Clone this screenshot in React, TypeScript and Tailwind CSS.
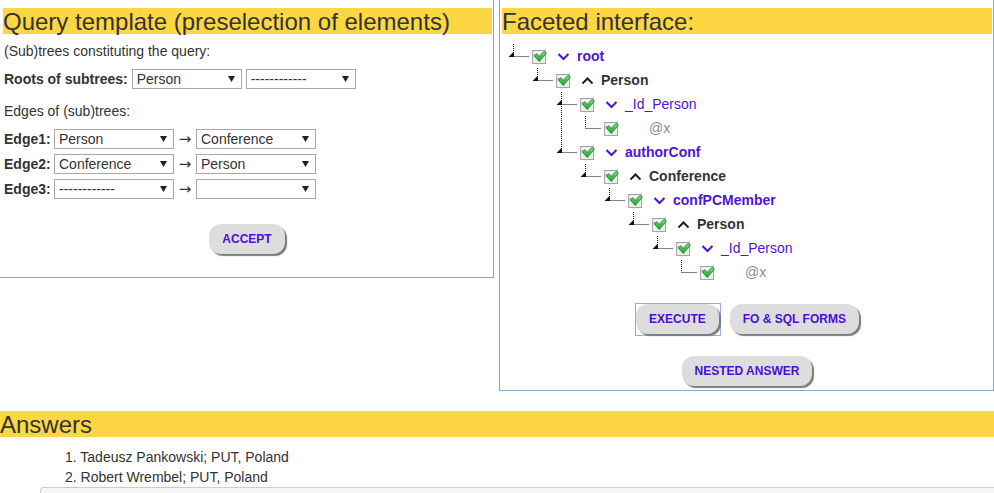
import type { ReactNode } from "react";

const PURPLE = "text-[#5014d4]";

function Select({ value, width }: { value: string; width: string }) {
  return (
    <div
      className={`${width} h-[20px] border border-[#a9a9a9] bg-white flex items-center justify-between pl-[4px] pr-[6px] text-[14px] text-[#333]`}
    >
      <span className="leading-none">{value}</span>
      <svg width="7" height="6" viewBox="0 0 7 6">
        <path d="M0 0 H7 L3.5 6 Z" fill="#222" />
      </svg>
    </div>
  );
}

function Button({ children }: { children: ReactNode }) {
  return (
    <button className="h-[30px] px-[13px] rounded-[12px] bg-[#dddddd] text-[12px] font-bold text-[#4a10d4] leading-none shadow-[2px_2px_1px_#7c7c7c]">
      {children}
    </button>
  );
}

function Header({ children }: { children: ReactNode }) {
  return (
    <div className="h-[26px] bg-[#fdd743] text-[24px] leading-[28px] text-[#333] whitespace-nowrap">
      {children}
    </div>
  );
}

function CheckBox() {
  return (
    <svg width="15" height="15" viewBox="0 0 15 15" className="shrink-0">
      <defs>
        <linearGradient id="chk" x1="0" y1="0" x2="0" y2="1">
          <stop offset="0" stopColor="#7be07b" />
          <stop offset="1" stopColor="#1c9c2a" />
        </linearGradient>
      </defs>
      <rect x="0.5" y="1.5" width="13" height="13" fill="#eeeeee" stroke="#a6a6a6" />
      <path
        d="M1.8 6.5 L5 4.8 L7.2 7.4 L12 2.3 L14.6 4.2 L7.2 12.6 Z"
        fill="url(#chk)"
        stroke="#178a24"
        strokeWidth="0.8"
        strokeLinejoin="round"
      />
    </svg>
  );
}

function Chevron({ dir, color }: { dir: "up" | "down"; color: string }) {
  return (
    <svg width="13" height="9" viewBox="0 0 13 9" className="ml-[10px] shrink-0">
      <polyline
        points={dir === "down" ? "1.5,2 6.5,7 11.5,2" : "1.5,7.5 6.5,2.5 11.5,7.5"}
        fill="none"
        stroke={color}
        strokeWidth="2"
      />
    </svg>
  );
}

type Row = {
  level: number;
  label: string;
  kind: "purpleBold" | "purple" | "black" | "attr";
  cont?: boolean;
  pass?: number[];
};

const rows: Row[] = [
  { level: 0, label: "root", kind: "purpleBold" },
  { level: 1, label: "Person", kind: "black" },
  { level: 2, label: "_Id_Person", kind: "purple", cont: true },
  { level: 3, label: "@x", kind: "attr", pass: [2] },
  { level: 2, label: "authorConf", kind: "purpleBold" },
  { level: 3, label: "Conference", kind: "black" },
  { level: 4, label: "confPCMember", kind: "purpleBold" },
  { level: 5, label: "Person", kind: "black" },
  { level: 6, label: "_Id_Person", kind: "purple" },
  { level: 7, label: "@x", kind: "attr" },
];

function Connector({ row }: { row: Row }) {
  const w = 24 * (row.level + 1);
  const vx = 24 * row.level + 5.5;
  const leaf = row.kind === "attr";
  return (
    <svg width={w} height="24" viewBox={`0 0 ${w} 24`} className="shrink-0">
      {(row.pass ?? []).map((p) => (
        <line key={p} x1={24 * p + 5.5} y1="0" x2={24 * p + 5.5} y2="24" stroke="#000" strokeDasharray="1 1" />
      ))}
      <line x1={vx} y1="0" x2={vx} y2={row.cont ? 24 : 12} stroke="#000" strokeDasharray="1 1" />
      <line x1={vx} y1="12.5" x2={24 * row.level + 21} y2="12.5" stroke="#000" strokeDasharray="1 1" />
      {!leaf && <path d={`M${vx - 5} 13 H${vx + 0.5} V7.5 Z`} fill="#111" />}
    </svg>
  );
}

function TreeRow({ row }: { row: Row }) {
  const label =
    row.kind === "purpleBold"
      ? `font-bold ${PURPLE}`
      : row.kind === "purple"
      ? PURPLE
      : row.kind === "black"
      ? "font-bold text-[#333]"
      : "text-[#8a8a8a]";
  return (
    <div className="flex items-center h-[24px]">
      <Connector row={row} />
      <CheckBox />
      {row.kind === "attr" ? (
        <span className="w-[23px] shrink-0" />
      ) : (
        <Chevron dir={row.kind === "black" ? "up" : "down"} color={row.kind === "black" ? "#222" : "#4a10d4"} />
      )}
      <span className={`ml-[7px] text-[14px] ${label}`}>{row.label}</span>
    </div>
  );
}

export default function App() {
  return (
    <div className="w-[994px] h-[493px] overflow-hidden bg-white font-['Liberation_Sans',Arial,sans-serif] text-[#333]">
      <div className="flex items-start">
        {/* Query template */}
        <div className="w-[494px] h-[278px] border-r border-b border-[#86a8cc] pl-[3px] pr-[1px] pt-[8px] shrink-0">
          <Header>Query template (preselection of elements)</Header>
          <div className="pl-[1px]">
            <div className="mt-[7px] text-[14px] leading-[20px]">(Sub)trees constituting the query:</div>
            <div className="mt-[8px] h-[20px] flex items-center gap-[4px] text-[14px] leading-[20px]">
              <span className="font-bold">Roots of subtrees:</span>
              <Select value="Person" width="w-[110px]" />
              <Select value="------------" width="w-[110px]" />
            </div>
            <div className="mt-[12px] text-[14px] leading-[20px]">Edges of (sub)trees:</div>
            <div className="mt-[8px] flex flex-col gap-[5px] text-[14px] leading-[20px]">
              {[
                ["Edge1:", "Person", "Conference"],
                ["Edge2:", "Conference", "Person"],
                ["Edge3:", "------------", ""],
              ].map(([e, a, b]) => (
                <div key={e} className="h-[20px] flex items-center gap-[4px]">
                  <span className="font-bold w-[46px]">{e}</span>
                  <Select value={a} width="w-[120px]" />
                  <span className="w-[14px] text-center font-['DejaVu_Sans',sans-serif] text-[15px] leading-[20px]">→</span>
                  <Select value={b} width="w-[120px]" />
                </div>
              ))}
            </div>
            <div className="mt-[25px] flex justify-center pr-[2px]">
              <Button>ACCEPT</Button>
            </div>
          </div>
        </div>

        {/* Faceted interface */}
        <div className="ml-[5px] w-[495px] h-[391px] border-l border-r border-b border-[#86a8cc] pl-[2px] pr-[1px] pt-[8px] shrink-0">
          <Header>Faceted interface:</Header>
          <div className="mt-[10px] ml-[6px]">
            {rows.map((r, i) => (
              <TreeRow key={i} row={r} />
            ))}
          </div>
          <div className="mt-[19px] flex justify-center items-start gap-[9px]">
            <div className="border border-[#97ade9] pr-[1px] pb-[1px]">
              <Button>EXECUTE</Button>
            </div>
            <div className="pt-px">
              <Button>FO &amp; SQL FORMS</Button>
            </div>
          </div>
          <div className="mt-[20px] flex justify-center">
            <Button>NESTED ANSWER</Button>
          </div>
        </div>
      </div>

      {/* Answers */}
      <div className="mt-[20px]">
        <Header>Answers</Header>
        <div className="mt-[10px] pl-[65px] text-[14px] leading-[20px]">
          <div>1. Tadeusz Pankowski; PUT, Poland</div>
          <div>2. Robert Wrembel; PUT, Poland</div>
        </div>
        <div className="ml-[40px] h-[20px] border-t border-l border-[#cccccc] rounded-tl-[4px] bg-[#f5f5f5]" />
      </div>
    </div>
  );
}
